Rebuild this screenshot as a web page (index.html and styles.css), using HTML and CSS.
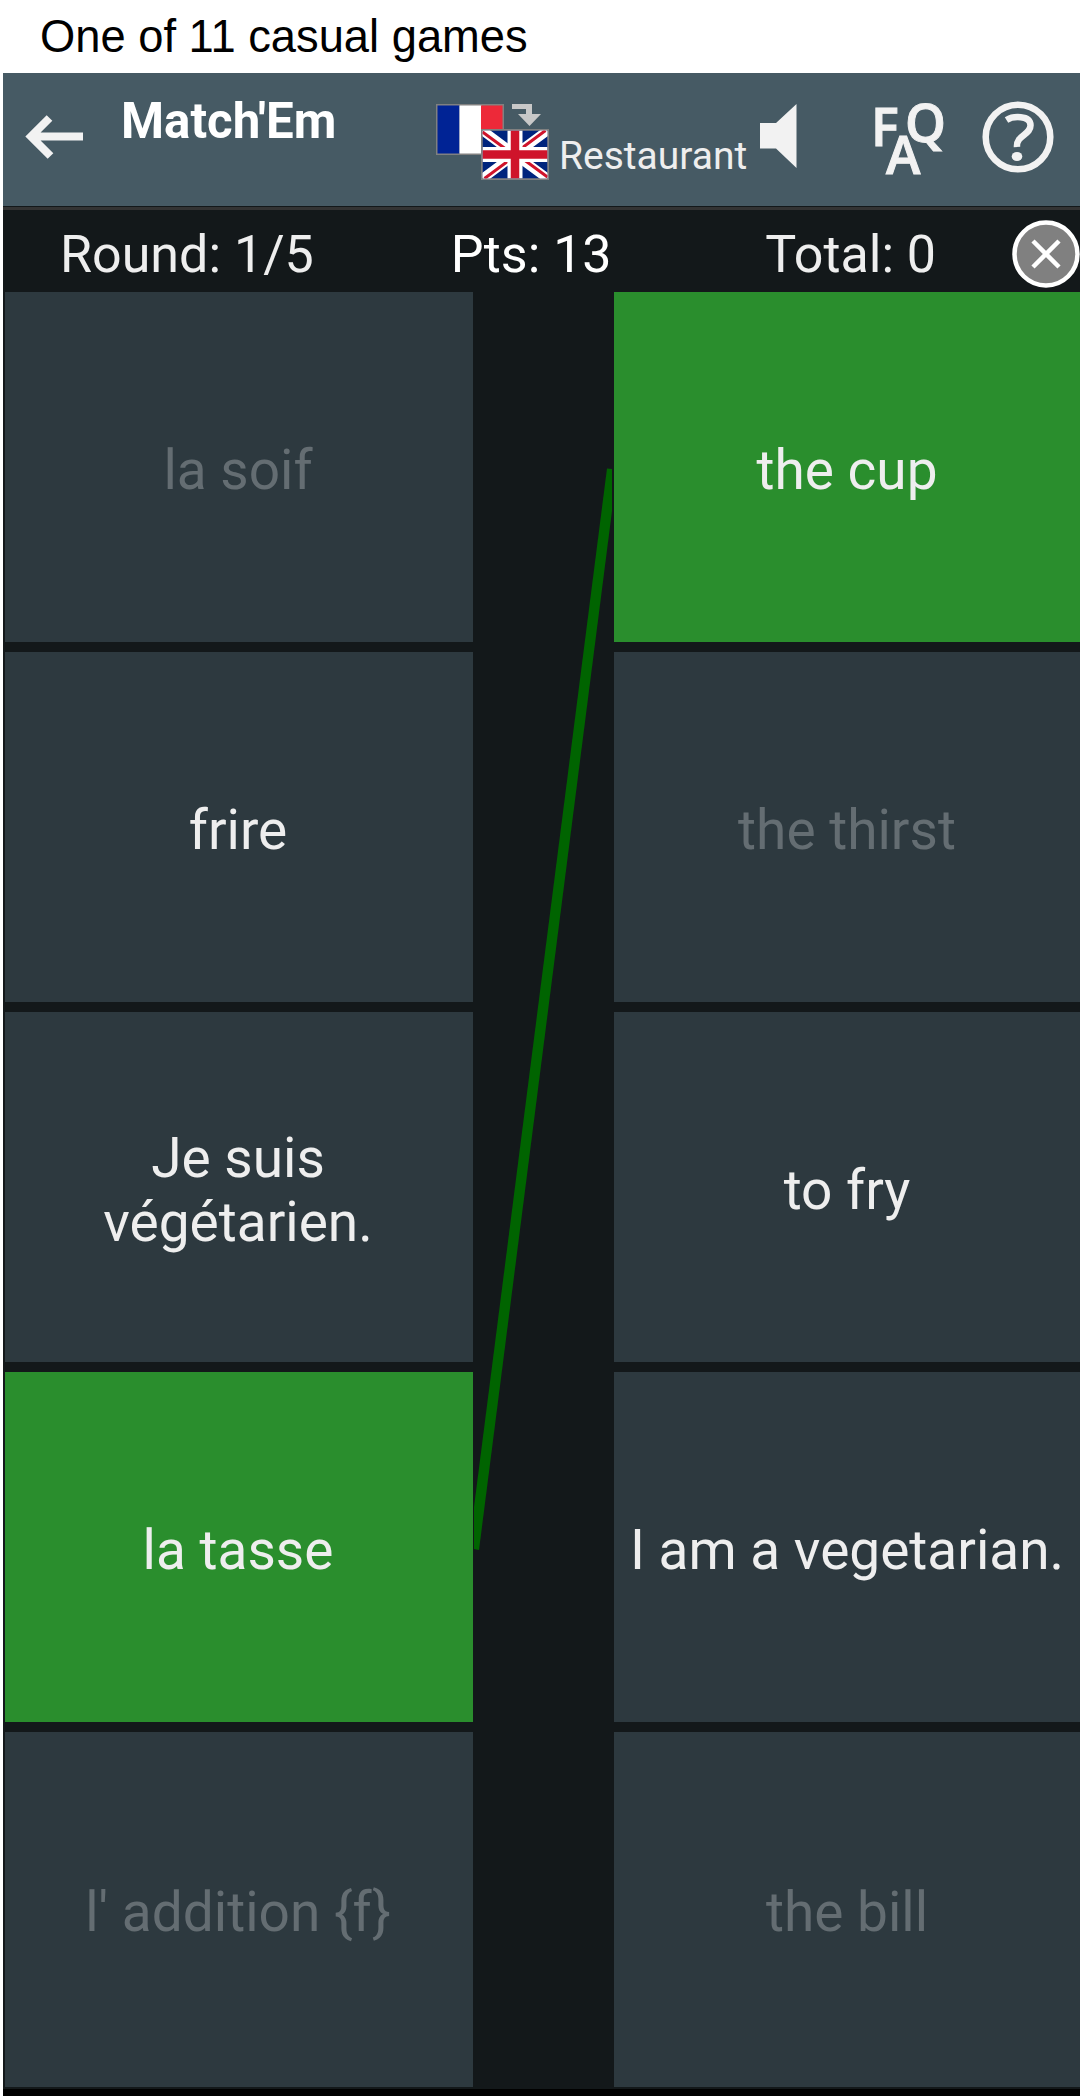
FILE: index.html
```html
<!DOCTYPE html>
<html lang="en">

<head>
    <meta charset="UTF-8">
    <meta name="viewport" content="width=device-width, initial-scale=1.0">
    <title>Match'Em</title>
    <link rel="stylesheet" href="styles.css">
</head>

<body>
    <h1 class="caption">One of 11 casual games</h1>
    <div class="app">
        <header class="toolbar">
            <svg class="back" width="60" height="46" viewBox="0 0 60 46">
                <path d="M58 22.500H8M24.500 4L6 22.500L25.500 42" />
            </svg>
            <h2 class="title">Match'Em</h2>
            <svg class="flags" width="113" height="76" viewBox="0 0 113 76">
                <rect width="68" height="51" fill="#808080" />
                <rect x="1.500" y="1.500" width="22" height="48" fill="#002395" />
                <rect x="23.500" y="1.500" width="22" height="48" fill="#fff" />
                <rect x="45" y="1.500" width="21.500" height="48" fill="#ed2939" />
                <path d="M76 0H96V10H105L93.500 22L82 10H90V5H76Z" fill="#c8c8c8" />
                <rect x="45" y="25" width="68" height="51" fill="#808080" />
                <svg x="46.500" y="26.500" width="65" height="48" viewBox="0 0 65 48">
                    <rect width="65" height="48" fill="#00247d" />
                    <path d="M0 0L65 48M65 0L0 48" stroke="#fff" stroke-width="9.500" />
                    <path d="M0 1.500L32 25M33 23L65 46.500M63 0L32 23M33 25L2 48" stroke="#cf142b" stroke-width="3" />
                    <path d="M32.500 0V48M0 24H65" stroke="#fff" stroke-width="15" />
                    <path d="M32.500 0V48M0 24H65" stroke="#cf142b" stroke-width="8.500" />
                </svg>
            </svg>
            <span class="topic">Restaurant</span>
            <svg class="speaker" width="37" height="64" viewBox="0 0 37 64">
                <path d="M0 19H16L36.500 0V64L16 44.500H0Z" />
            </svg>
            <svg class="faq" width="74" height="76" viewBox="0 0 74 76">
                <text x="-2" y="44">F</text>
                <text x="32" y="40">Q</text>
                <text x="13" y="71.500">A</text>
            </svg>
            <svg class="help" width="72" height="72" viewBox="0 0 72 72">
                <circle cx="36" cy="36" r="32.300" />
                <path d="M24.500 19C31 15 48 14 48.500 24C49 34 34 34 35 46" />
                <ellipse class="dot" cx="35" cy="55.500" rx="5.300" ry="4.500" />
            </svg>
        </header>
        <div class="stats">
            <span class="round">Round: 1/5</span>
            <span class="points">Pts: 13</span>
            <span class="total">Total: 0</span>
            <svg class="close" width="68" height="68" viewBox="0 0 68 68">
                <circle cx="34" cy="34" r="31.500" />
                <path d="M21 21L47 47M47 21L21 47" />
            </svg>
        </div>
        <main class="board">
            <div class="column">
                <div class="tile done">la soif</div>
                <div class="tile">frire</div>
                <div class="tile">Je suis végétarien.</div>
                <div class="tile match">la tasse</div>
                <div class="tile done">l' addition {f}</div>
            </div>
            <!-- connects "la tasse" with "the cup" -->
            <svg class="link" width="141" height="1795" viewBox="0 0 141 1795">
                <polygon points="134,176.500 139,177 139,219 6,1258 1,1257 1,1215" />
            </svg>
            <div class="column">
                <div class="tile match">the cup</div>
                <div class="tile done">the thirst</div>
                <div class="tile">to fry</div>
                <div class="tile">I am a vegetarian.</div>
                <div class="tile done">the bill</div>
            </div>
        </main>
    </div>
</body>

</html>
```
FILE: styles.css
```css
* {
    box-sizing: border-box;
}

body {
    margin: 0;
    width: 1080px;
    height: 2096px;
    overflow: hidden;
    background-color: #fff;
    font-family: Roboto, sans-serif;
}

.caption {
    margin: 0;
    height: 73px;
    padding-left: 40px;
    font: 45.3px/73px "Liberation Sans", Arial, sans-serif;
    color: #000;
}

.app {
    margin-left: 3px;
    height: 2023px;
    background-color: #13181a;
    border-bottom: 7px solid #000;
}

.toolbar {
    display: flex;
    align-items: flex-start;
    height: 133px;
    background-color: #465a64;
}

.toolbar svg {
    flex: none;
}

.back {
    margin: 41px 0 0 22px;
    fill: none;
    stroke: #f2f2f2;
    stroke-width: 8;
}

.title {
    width: 314px;
    margin: 19px 0 0 36px;
    font-size: 49.2px;
    line-height: 58px;
    color: #fff;
}

.flags {
    margin: 31px 0 0 1px;
}

.topic {
    width: 201px;
    margin: 60px 0 0 10px;
    font-size: 39px;
    line-height: 46px;
    color: #eee;
}

.speaker {
    margin-top: 31px;
    fill: #f2f2f2;
}

.faq {
    margin: 29px 0 0 76px;
    overflow: visible;
    fill: #f2f2f2;
    stroke: #f2f2f2;
    stroke-width: 1;
    font: 600 52px "Open Sans", sans-serif;
}

.help {
    margin: 28px 0 0 35px;
    fill: none;
    stroke: #f2f2f2;
    stroke-width: 6.5;
}

.help .dot {
    fill: #f2f2f2;
    stroke: none;
}

.stats {
    display: flex;
    height: 86px;
    border-top: 1px solid #13181a;
    box-shadow: inset 0 3px #333;
    font-size: 52px;
    line-height: 95px;
    color: #eee;
}

.round {
    width: 389px;
    padding-left: 57px;
}

.points {
    width: 374px;
    padding-left: 59px;
    color: #fff;
}

.total {
    width: 247px;
}

.close {
    flex: none;
    margin-top: 13px;
    fill: #808080;
    stroke: #fff;
    stroke-width: 4.5;
}

.board {
    display: flex;
    padding-left: 2px;
}

.column {
    display: flex;
    flex-direction: column;
    gap: 10px;
    width: 468px;
}

.tile {
    display: flex;
    align-items: center;
    justify-content: center;
    height: 350px;
    padding: 6px 11px 0 9px;
    background-color: #2d393f;
    color: #eee;
    font-size: 55px;
    line-height: 64px;
    text-align: center;
}

.tile:last-child {
    height: 355px;
    padding-top: 4px;
}

.match {
    background-color: #2a8e2d;
}

.done {
    color: #646d72;
}

.link {
    flex: none;
    fill: #006400;
}

.link + .column {
    width: 466px;
}

.link + .column .tile {
    padding-right: 10px;
    padding-left: 10px;
}
```
